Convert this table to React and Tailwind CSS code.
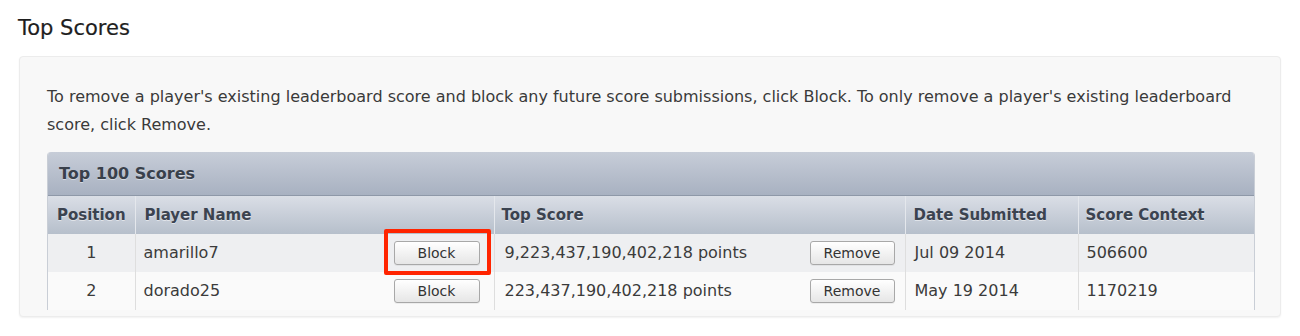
const rows = [
  { pos: 1, name: "amarillo7", score: "9,223,437,190,402,218 points", date: "Jul 09 2014", context: "506600", highlight: true },
  { pos: 2, name: "dorado25", score: "223,437,190,402,218 points", date: "May 19 2014", context: "1170219" },
];

function PlainButton({ children, className = "" }) {
  return (
    <button
      className={`h-[24px] rounded-[3px] border border-[#a8a8a8] bg-gradient-to-b from-white to-[#e6e6e6] text-[14px] leading-none text-[#333] shadow-[0_1px_0_rgba(0,0,0,0.05)] ${className}`}
    >
      {children}
    </button>
  );
}

export default function App() {
  return (
    <div className="h-[336px] w-[1300px] bg-white font-['DejaVu_Sans',sans-serif] text-[#3b3b3b]">
      <h2 className="pl-[18px] pt-[15px] text-[21px] leading-[26px] text-[#1e1e1e] [-webkit-text-stroke:0.2px_#1e1e1e]">Top Scores</h2>

      <div className="ml-[19px] mt-[15px] w-[1262px] h-[261px] rounded-[4px] border border-[#ececec] bg-[#f8f8f8] shadow-[0_1px_2px_rgba(0,0,0,0.06)] px-[27px] pt-[26px]">
        <p className="text-[16px] leading-[28px] text-[#3a3a3a]">
          To remove a player's existing leaderboard score and block any future score submissions, click Block. To only remove a player's existing leaderboard score, click Remove.
        </p>

        <div className="mt-[13px] w-[1208px] overflow-hidden rounded-t-[4px] border-x border-[#c9ced6]">
          <div className="h-[44px] flex items-center pl-[11px] bg-gradient-to-b from-[#c7cdd8] to-[#a8b1c1] border-b border-[#8e98a8] text-[16px] font-bold text-[#39404b] [text-shadow:0_1px_0_rgba(255,255,255,0.45)]">
            Top 100 Scores
          </div>
          <table className="w-full border-collapse text-[16px]">
            <thead>
              <tr className="h-[38px] bg-gradient-to-b from-[#dadee6] to-[#b6bfcb] text-left text-[15px] text-[#3b4350] font-bold [text-shadow:0_1px_0_rgba(255,255,255,0.5)]">
                <th className="w-[87px] text-center border-r border-[#e4e7ec]">Position</th>
                <th className="w-[359px] pl-[9px] border-r border-[#e4e7ec]">Player Name</th>
                <th className="w-[411px] pl-[7px] border-r border-[#e4e7ec]">Top Score</th>
                <th className="w-[173px] pl-[8px] border-r border-[#e4e7ec]">Date Submitted</th>
                <th className="pl-[7px]">Score Context</th>
              </tr>
            </thead>
            <tbody>
              {rows.map((r, i) => (
                <tr key={r.pos} className={`h-[38px] ${i % 2 === 0 ? "bg-[#eeeff1]" : "bg-[#fafafa]"}`}>
                  <td className="text-center border-r border-[#dedede]">{r.pos}</td>
                  <td className="pl-[8px] pr-[14px] border-r border-[#dedede]">
                    <div className="flex items-center justify-between">
                      <span>{r.name}</span>
                      <span className="relative">
                        <PlainButton className="w-[86px]">Block</PlainButton>
                        {r.highlight && (
                          <span className="pointer-events-none absolute -left-[10px] -top-[12px] h-[46px] w-[107px] rounded-[2px] border-[4px] border-[#ff2400]" />
                        )}
                      </span>
                    </div>
                  </td>
                  <td className="pl-[10px] pr-[10px] border-r border-[#dedede]">
                    <div className="flex items-center justify-between">
                      <span>{r.score}</span>
                      <PlainButton className="w-[85px]">Remove</PlainButton>
                    </div>
                  </td>
                  <td className="pl-[9px] border-r border-[#dedede]">{r.date}</td>
                  <td className="pl-[8px]">{r.context}</td>
                </tr>
              ))}
            </tbody>
          </table>
        </div>
      </div>
    </div>
  );
}
